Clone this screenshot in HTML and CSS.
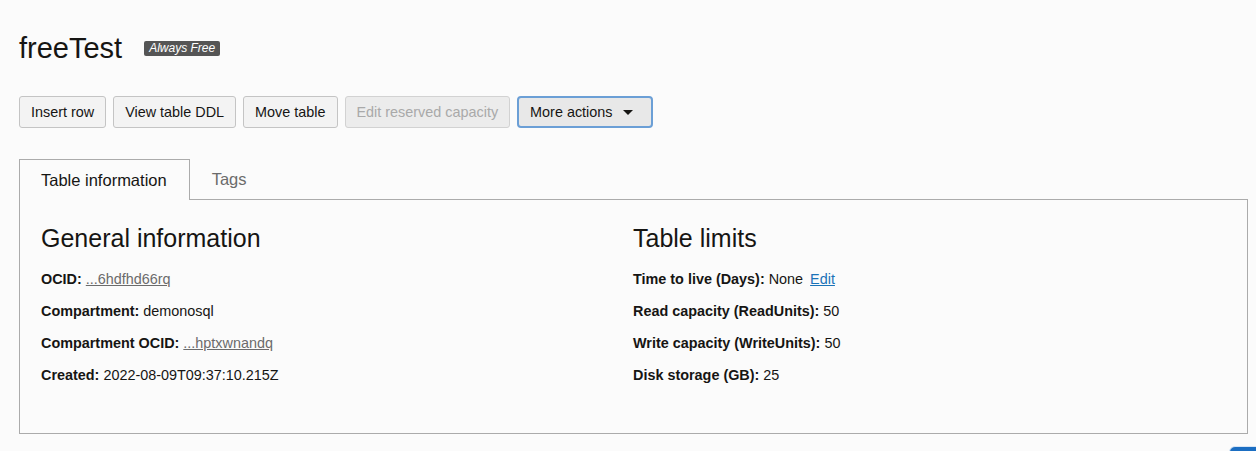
FILE: index.html
```html
<!DOCTYPE html>
<html lang="en">
<head>
<meta charset="utf-8">
<title>freeTest</title>
<link rel="stylesheet" href="styles.css">
</head>
<body>
<div class="page">
  <header class="title-row">
    <h1 class="title">freeTest</h1>
    <span class="badge">Always Free</span>
  </header>
  <div class="actions">
    <button class="btn">Insert row</button>
    <button class="btn">View table DDL</button>
    <button class="btn">Move table</button>
    <button class="btn btn-disabled" disabled>Edit reserved capacity</button>
    <button class="btn btn-menu">More actions <span class="caret"></span></button>
  </div>
  <div class="tabs">
    <div class="tab tab-active">Table information</div>
    <div class="tab">Tags</div>
  </div>
  <section class="panel">
    <div class="col">
      <h2 class="heading">General information</h2>
      <div class="row"><b>OCID:</b> <a class="ocid" href="#">...6hdfhd66rq</a></div>
      <div class="row"><b>Compartment:</b> demonosql</div>
      <div class="row"><b>Compartment OCID:</b> <a class="ocid" href="#">...hptxwnandq</a></div>
      <div class="row"><b>Created:</b> 2022-08-09T09:37:10.215Z</div>
    </div>
    <div class="col">
      <h2 class="heading">Table limits</h2>
      <div class="row"><b>Time to live (Days):</b> None <a class="edit" href="#">Edit</a></div>
      <div class="row"><b>Read capacity (ReadUnits):</b> 50</div>
      <div class="row"><b>Write capacity (WriteUnits):</b> 50</div>
      <div class="row"><b>Disk storage (GB):</b> 25</div>
    </div>
  </section>
</div>
<div class="help-fab"></div>
</body>
</html>
```

FILE: styles.css
```css
html, body {
  margin: 0;
  padding: 0;
  background: #fbfbfb;
}
body {
  font-family: "Liberation Sans", Arial, sans-serif;
  font-size: 14.4px;
  color: #161513;
  overflow: hidden;
}
.page {
  padding: 31px 8px 0 19px;
}
.title-row {
  display: flex;
  align-items: center;
  gap: 22px;
  height: 34px;
}
.title {
  margin: 0;
  font-size: 29px;
  font-weight: normal;
  line-height: 34px;
}
.badge {
  background: #555555;
  color: #ffffff;
  font-style: italic;
  font-size: 12px;
  line-height: 15px;
  padding: 0 5px;
  border-radius: 2px;
  margin-top: 1px;
}
.actions {
  display: flex;
  gap: 7px;
  margin-top: 31px;
}
.btn {
  font-family: inherit;
  font-size: 14.4px;
  color: #161513;
  background: #f3f3f3;
  border: 1px solid #c4c4c4;
  border-radius: 3px;
  height: 32px;
  padding: 0 11px;
  display: flex;
  align-items: center;
  cursor: pointer;
}
.btn-disabled {
  color: #a9a9a9;
  background: #ececec;
  border-color: #d2d2d2;
  cursor: default;
}
.btn-menu {
  background: #e8e8e8;
  border: 2px solid #6b9fd6;
  border-radius: 4px;
  padding: 0 18px 0 11px;
  gap: 11px;
}
.caret {
  width: 0;
  height: 0;
  border-left: 5px solid transparent;
  border-right: 5px solid transparent;
  border-top: 5px solid #161513;
  margin-top: 1px;
}
.tabs {
  display: flex;
  margin-top: 31px;
  position: relative;
  z-index: 1;
}
.tab {
  height: 40px;
  box-sizing: border-box;
  display: flex;
  align-items: center;
  font-size: 16.5px;
  color: #6b6b6b;
  padding: 0 22px;
}
.tab-active {
  color: #161513;
  background: #fbfbfb;
  border: 1px solid #ababab;
  border-bottom: none;
  height: 41px;
  padding: 1px 22px 0 21px;
}
.panel {
  margin-top: -1px;
  border: 1px solid #ababab;
  display: grid;
  grid-template-columns: 1fr 1fr;
  padding: 23px 22px 48px 21px;
}
.heading {
  margin: 0 0 16px 0;
  font-size: 25px;
  font-weight: normal;
  line-height: 30px;
}
.row {
  line-height: 20px;
  margin-bottom: 12px;
}
.row:last-child {
  margin-bottom: 0;
}
.ocid {
  color: #6b6b6b;
  text-decoration: underline;
}
.edit {
  color: #1a73b8;
  text-decoration: underline;
  margin-left: 3px;
}
.help-fab {
  position: fixed;
  left: 1229px;
  top: 446px;
  width: 60px;
  height: 30px;
  background: #1b6ec2;
  border: 1px solid #d9e6f5;
  border-radius: 6px;
}
```
